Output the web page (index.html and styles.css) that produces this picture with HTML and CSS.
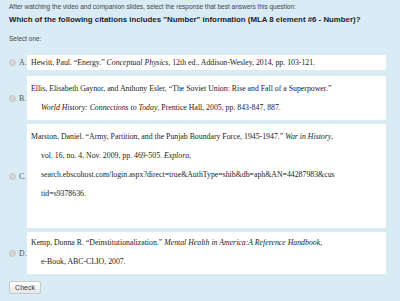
FILE: index.html
```html
<!DOCTYPE html>
<html lang="en">
<head>
    <meta charset="UTF-8">
    <meta name="viewport" content="width=device-width, initial-scale=1.0">
    <title>Quiz Question</title>
    <link rel="stylesheet" href="styles.css">
</head>
<body>

    <p class="intro">After watching the video and companion slides, select the response that best answers this question:</p>
    <p class="question">Which of the following citations includes "Number" information (MLA 8 element #6 - Number)?</p>
    <p class="select-one">Select one:</p>

    <!-- Answer options -->
    <div class="answers">
        <div class="answer answer-a">
            <div class="marker"><span class="radio"></span><span class="letter">A.</span></div>
            <div class="citation single">Hewitt, Paul. “Energy.” <i>Conceptual Physics</i>, 12th ed., Addison-Wesley, 2014, pp. 103-121.</div>
        </div>

        <div class="answer answer-b">
            <div class="marker"><span class="radio"></span><span class="letter">B.</span></div>
            <div class="citation">Ellis, Elisabeth Gaynor, and Anthony Esler, “The Soviet Union: Rise and Fall of a Superpower.”<br><i>World History: Connections to Today</i>, Prentice Hall, 2005, pp. 843-847, 887.</div>
        </div>

        <div class="answer answer-c">
            <div class="marker"><span class="radio"></span><span class="letter">C.</span></div>
            <div class="citation">Marston, Daniel. “Army, Partition, and the Punjab Boundary Force, 1945-1947.” <i>War in History</i>,<br>vol. 16, no. 4, Nov. 2009, pp. 469-505. <i>Explora</i>,<br>search.ebscohost.com/login.aspx?direct=true&amp;AuthType=shib&amp;db=aph&amp;AN=44287983&amp;cus<br>tid=s9378636.</div>
        </div>

        <div class="answer answer-d">
            <div class="marker"><span class="radio"></span><span class="letter">D.</span></div>
            <div class="citation">Kemp, Donna R. “Deinstitutionalization.” <i>Mental Health in America:A Reference Handbook</i>,<br>e-Book, ABC-CLIO, 2007.</div>
        </div>
    </div>

    <button class="check-btn" type="button">Check</button>

</body>
</html>
```

FILE: styles.css
```css
body {
    margin: 0;
    padding: 2px 14px 0 9px;
    background-color: #d9ebf5;
    font-family: 'Liberation Sans', Arial, sans-serif;
    color: #333;
}

.intro {
    margin: 0;
    font-size: 6.5px;
    line-height: 10px;
    color: #444;
    white-space: nowrap;
}

.question {
    margin: 1px 0 0;
    font-size: 7.85px;
    line-height: 14px;
    font-weight: bold;
    color: #222;
    white-space: nowrap;
}

.select-one {
    margin: 7px 0 0;
    font-size: 6.5px;
    line-height: 10px;
    color: #444;
}

.answers {
    margin-top: 11px;
    display: flex;
    flex-direction: column;
    gap: 4px;
}

.answer {
    display: flex;
    align-items: center;
}

.answer-a {
    margin-bottom: 2px;
}

.marker {
    width: 18px;
    display: flex;
    align-items: center;
    flex-shrink: 0;
}

.radio {
    width: 5px;
    height: 5px;
    border-radius: 50%;
    background-color: #d6d6d6;
    border: 0.5px solid #c4c4c4;
    margin-right: 3px;
}

.letter {
    font-family: 'Liberation Serif', 'Times New Roman', serif;
    font-size: 7.8px;
    color: #555;
}

/* hanging lines sit further in than the first */
.citation {
    flex: 1;
    align-self: stretch;
    background-color: #fff;
    padding: 3px 0 3px 14px;
    text-indent: -10px;
    font-family: 'Liberation Serif', 'Times New Roman', serif;
    font-size: 7.8px;
    line-height: 19px;
    color: #222;
    white-space: nowrap;
    overflow: hidden;
}

.citation.single {
    padding-top: 0;
    padding-bottom: 0;
    line-height: 15px;
}

.answer-c .citation {
    padding-bottom: 25px;
}

.answer-d .citation {
    padding-top: 1px;
}

.check-btn {
    display: block;
    margin-top: 7px;
    width: 32px;
    height: 13px;
    padding: 0;
    font-family: 'Liberation Sans', Arial, sans-serif;
    font-size: 7px;
    color: #333;
    background: linear-gradient(#ffffff, #e6e6e6);
    border: 1px solid #c8c8c8;
    border-radius: 2px;
    box-shadow: 0 1px 1px rgba(0, 0, 0, 0.08);
    cursor: pointer;
}
```
